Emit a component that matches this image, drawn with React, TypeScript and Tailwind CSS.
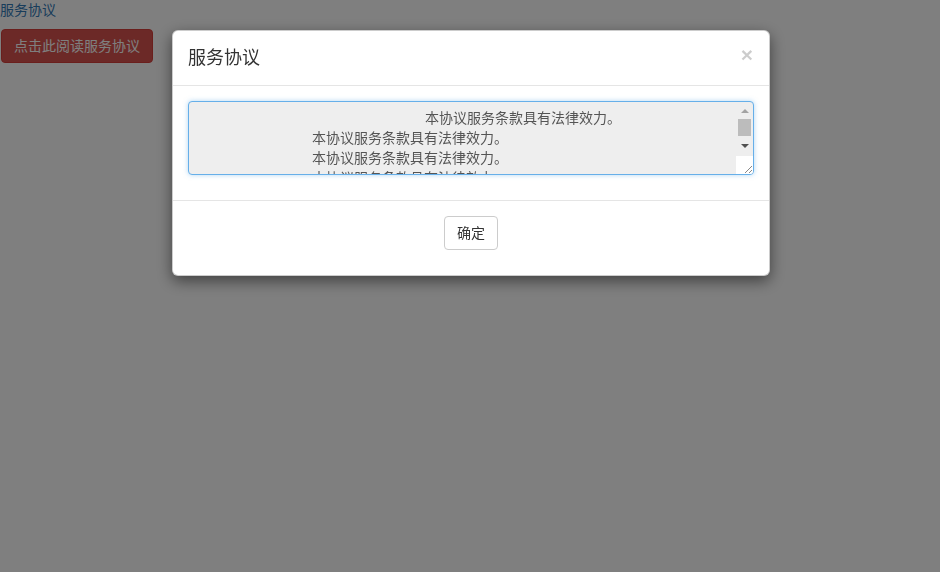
import React from "react";

const line = "本协议服务条款具有法律效力。";

export default function App() {
  return (
    <div className="min-h-[572px] bg-white text-sm leading-5 text-[#333]" style={{ fontFamily: '"Liberation Sans", "Noto Sans CJK SC", sans-serif' }}>
      <a href="#" className="block text-[#337ab7]">服务协议</a>
      <button className="ml-px mt-[9px] rounded border border-[#d43f3a] bg-[#d9534f] px-3 py-1.5 text-white">
        点击此阅读服务协议
      </button>

      <div className="fixed inset-0 bg-black/50">
        <div className="ml-[172px] mt-[30px] w-[598px] rounded-md border border-black/20 bg-white shadow-[0_5px_15px_rgba(0,0,0,0.5)]">
          <div className="flex items-start justify-between border-b border-[#e5e5e5] px-[15px] pt-[15px] pb-[14px]">
            <h4 className="text-lg leading-[25px] text-[#333]">服务协议</h4>
            <span className="-mt-[2px] mr-[1px] text-[21px] font-bold leading-none text-black/20">×</span>
          </div>
          <div className="px-[15px] pt-[15px] pb-[25px]">
            <div className="relative h-[74px] overflow-hidden rounded border border-[#66afe9] bg-[#eee] shadow-[0_0_5px_rgba(102,175,233,0.5)]">
              <div className="pt-[6px] text-[#555]">
                <div className="pl-[236px]">{line}</div>
                <div className="pl-[123px]">{line}</div>
                <div className="pl-[123px]">{line}</div>
                <div className="pl-[123px]">{line}</div>
              </div>
              <div className="absolute right-0 top-0 flex h-full w-[17px] flex-col">
                <div className="flex h-[17px] items-center justify-center">
                  <div className="h-0 w-0 border-x-[4px] border-b-[4px] border-x-transparent border-b-[#a3a3a3]" />
                </div>
                <div className="mx-[2px] h-[17px] bg-[#bcbcbc]" />
                <div className="flex h-[20px] items-center justify-center">
                  <div className="h-0 w-0 border-x-[4px] border-t-[4px] border-x-transparent border-t-[#505050]" />
                </div>
                <div className="relative flex-1 bg-white">
                  <svg className="absolute bottom-0 right-0" width="10" height="10" viewBox="0 0 10 10">
                    <path d="M9 2 L2 9 M9 6 L6 9" stroke="#888" strokeWidth="1" />
                  </svg>
                </div>
              </div>
            </div>
          </div>
          <div className="flex justify-center border-t border-[#e5e5e5] pt-[15px] pb-[25px]">
            <button className="rounded border border-[#ccc] bg-white px-3 py-1.5 text-[#333]">确定</button>
          </div>
        </div>
      </div>
    </div>
  );
}
